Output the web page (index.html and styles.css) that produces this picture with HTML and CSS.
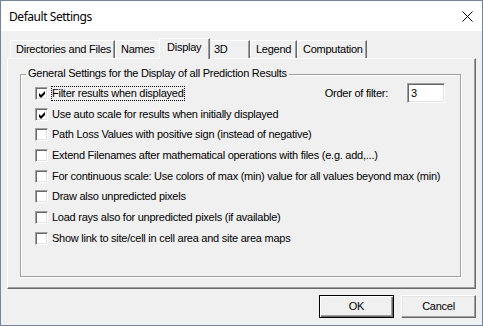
FILE: index.html
```html
<!DOCTYPE html>
<html>
<head>
<meta charset="utf-8">
<link rel="stylesheet" href="styles.css">
</head>
<body>
<div class="window">
  <div class="titlebar">
    <span class="title">Default Settings</span>
    <svg class="close" width="11" height="11" viewBox="0 0 11 11"><path d="M0.5 0.5L10.5 10.5M10.5 0.5L0.5 10.5" stroke="#000" stroke-width="1" fill="none"/></svg>
  </div>
  <div class="client">
    <div class="tabs">
      <div class="tab t1">Directories and Files</div>
      <div class="tab t2">Names</div>
      <div class="tab active t3">Display</div>
      <div class="tab t4">3D</div>
      <div class="tab t5">Legend</div>
      <div class="tab t6">Computation</div>
    </div>
    <div class="pane">
      <div class="group">
        <div class="caption">General Settings for the Display of all Prediction Results</div>
        <div class="rows">
          <div class="row">
            <span class="cb"><svg width="9" height="9" viewBox="0 0 9 9"><polygon points="1,3 3,5 7,1 7,4 3,8 1,6" fill="#000"/></svg></span>
            <span class="label focus">Filter results when displayed</span>
            <span class="spacer"></span>
            <span class="order">Order of filter:</span>
            <span class="input">3</span>
          </div>
          <div class="row">
            <span class="cb"><svg width="9" height="9" viewBox="0 0 9 9"><polygon points="1,3 3,5 7,1 7,4 3,8 1,6" fill="#000"/></svg></span>
            <span class="label">Use auto scale for results when initially displayed</span>
          </div>
          <div class="row">
            <span class="cb"></span>
            <span class="label">Path Loss Values with positive sign (instead of negative)</span>
          </div>
          <div class="row">
            <span class="cb"></span>
            <span class="label">Extend Filenames after mathematical operations with files (e.g. add,...)</span>
          </div>
          <div class="row">
            <span class="cb"></span>
            <span class="label">For continuous scale: Use colors of max (min) value for all values beyond max (min)</span>
          </div>
          <div class="row">
            <span class="cb"></span>
            <span class="label">Draw also unpredicted pixels</span>
          </div>
          <div class="row">
            <span class="cb"></span>
            <span class="label">Load rays also for unpredicted pixels (if available)</span>
          </div>
          <div class="row">
            <span class="cb"></span>
            <span class="label">Show link to site/cell in cell area and site area maps</span>
          </div>
        </div>
      </div>
    </div>
    <div class="buttons">
      <div class="btn default">OK</div>
      <div class="btn">Cancel</div>
    </div>
  </div>
</div>
</body>
</html>
```
FILE: styles.css
```css
* { box-sizing: border-box; }
html, body { margin: 0; padding: 0; background: #f0f0f0; }
body {
  font-family: "Liberation Sans", Arial, sans-serif;
  font-size: 11px;
  color: #000;
}
.window {
  width: 483px;
  height: 326px;
  border: 1px solid #72859c;
  background: #f0f0f0;
  display: flex;
  flex-direction: column;
}
.titlebar {
  height: 30px;
  background: #fff;
  display: flex;
  align-items: center;
  padding-left: 8px;
  padding-right: 9px;
}
.title {
  font-family: "Noto Sans", "Liberation Sans", sans-serif;
  font-size: 12px;
  letter-spacing: -0.45px;
  flex: 1;
  line-height: 16px;
  margin-top: 1px;
}
.close { display: block; margin-top: 1px; }
.client {
  flex: 1;
  display: flex;
  flex-direction: column;
  letter-spacing: -0.25px;
}
.tabs {
  height: 27px;
  display: flex;
  align-items: flex-end;
  margin-left: 9px;
}
.tab {
  height: 18px;
  line-height: 16px;
  border-top: 1px solid #fff;
  border-left: 1px solid #fff;
  border-right: 1px solid #696969;
  box-shadow: inset -1px 0 0 #a0a0a0;
  padding: 0 4px 0 5px;
  white-space: nowrap;
}
.tab.t1 { width: 105px; }
.tab.t2 { width: 46px; }
.tab.t3 { width: 47px; }
.tab.t4 { width: 42px; }
.tab.t5 { width: 47px; }
.tab.t6 { width: 70px; }
.tab.active {
  position: relative;
  z-index: 1;
  height: 21px;
  margin: 0 -2px -1px -2px;
  width: 51px;
  background: #f0f0f0;
  line-height: 17px;
  padding-left: 7px;
}
.pane {
  margin-left: 6px;
  width: 469px;
  height: 231px;
  border-top: 1px solid #fff;
  border-left: 1px solid #fff;
  border-right: 1px solid #696969;
  border-bottom: 1px solid #696969;
  box-shadow: inset -1px -1px 0 #a0a0a0;
  padding: 15px 0 0 12px;
}
.group {
  position: relative;
  width: 441px;
  height: 203px;
  border: 1px solid #a0a0a0;
  box-shadow: 1px 1px 0 #fff, inset 1px 1px 0 #fff;
}
.caption {
  position: absolute;
  left: 5px;
  top: -8px;
  line-height: 13px;
  padding: 0 2px;
  background: #f0f0f0;
  white-space: nowrap;
}
.rows {
  padding: 8px 15px 0 14px;
  display: flex;
  flex-direction: column;
}
.row {
  height: 20.7px;
  display: flex;
  align-items: center;
  white-space: nowrap;
}
.cb {
  width: 13px;
  height: 13px;
  flex: none;
  background: #fff;
  border-top: 1px solid #a0a0a0;
  border-left: 1px solid #a0a0a0;
  border-right: 1px solid #fff;
  border-bottom: 1px solid #fff;
  box-shadow: inset 1px 1px 0 #696969, inset -1px -1px 0 #e3e3e3;
  padding: 1px 0 0 1px;
}
.cb svg { display: block; margin: 1px 0 0 1px; }
.label {
  margin-left: 4px;
  line-height: 13px;
}
.focus { outline: 1px dotted #000; outline-offset: 0; }
.spacer { flex: 1; }
.input {
  margin-left: 19px;
  width: 38px;
  height: 20px;
  background: #fff;
  border-top: 1px solid #a0a0a0;
  border-left: 1px solid #a0a0a0;
  border-right: 1px solid #fff;
  border-bottom: 1px solid #fff;
  box-shadow: inset 1px 1px 0 #696969, inset -1px -1px 0 #e3e3e3;
  padding: 2px 0 0 3px;
  line-height: 14px;
}
.buttons {
  display: flex;
  justify-content: flex-end;
  gap: 7px;
  margin-top: 6px;
  padding-right: 6px;
}
.btn {
  width: 75px;
  height: 23px;
  border-top: 1px solid #fff;
  border-left: 1px solid #fff;
  border-right: 1px solid #696969;
  border-bottom: 1px solid #696969;
  box-shadow: inset -1px -1px 0 #a0a0a0, inset 1px 1px 0 #e3e3e3;
  text-align: center;
  line-height: 20px;
}
.btn.default {
  border: 1px solid #000;
  box-shadow: inset 1px 1px 0 #fff, inset -1px -1px 0 #696969, inset -2px -2px 0 #a0a0a0;
}
```
